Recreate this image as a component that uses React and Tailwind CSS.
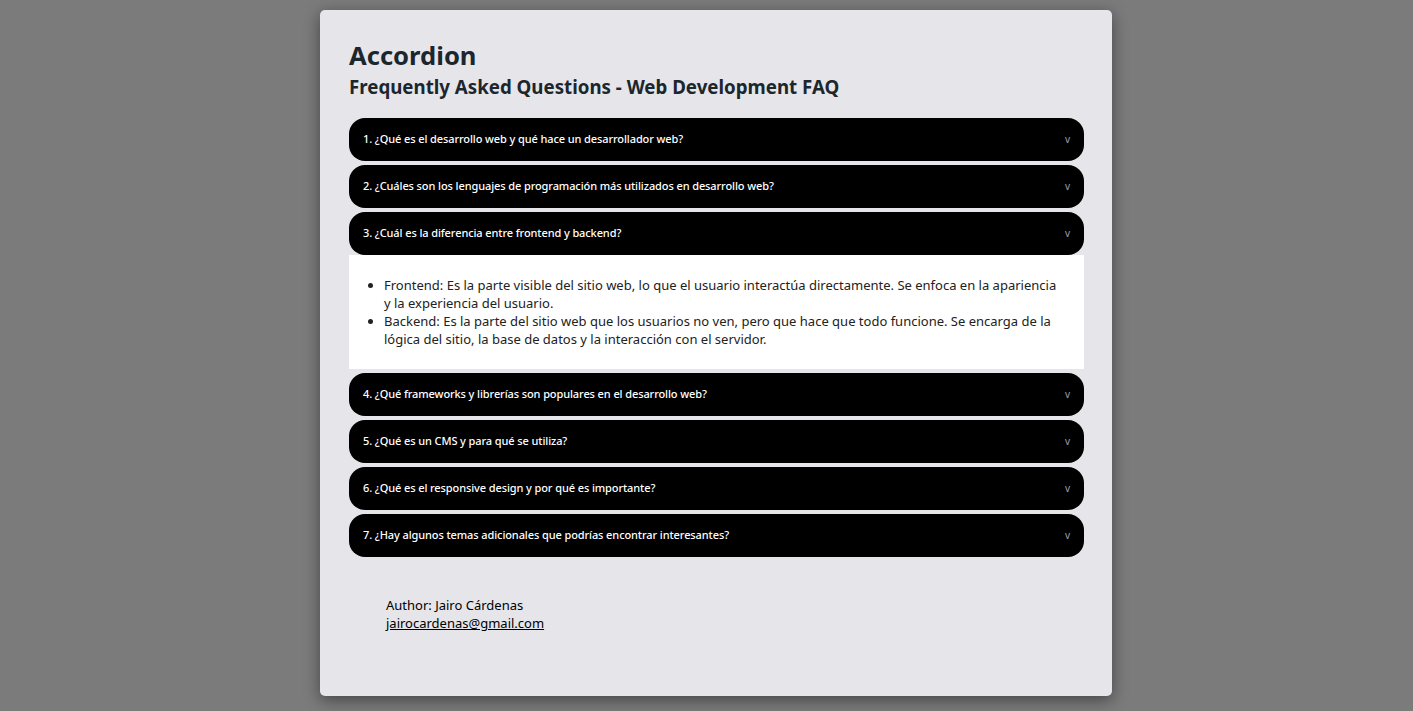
const faqs = [
  { q: '1. ¿Qué es el desarrollo web y qué hace un desarrollador web?' },
  { q: '2. ¿Cuáles son los lenguajes de programación más utilizados en desarrollo web?' },
  {
    q: '3. ¿Cuál es la diferencia entre frontend y backend?',
    open: true,
    items: [
      'Frontend: Es la parte visible del sitio web, lo que el usuario interactúa directamente. Se enfoca en la apariencia y la experiencia del usuario.',
      'Backend: Es la parte del sitio web que los usuarios no ven, pero que hace que todo funcione. Se encarga de la lógica del sitio, la base de datos y la interacción con el servidor.',
    ],
  },
  { q: '4. ¿Qué frameworks y librerías son populares en el desarrollo web?' },
  { q: '5. ¿Qué es un CMS y para qué se utiliza?' },
  { q: '6. ¿Qué es el responsive design y por qué es importante?' },
  { q: '7. ¿Hay algunos temas adicionales que podrías encontrar interesantes?' },
];

const FaqItem = ({ faq }) => (
  <div>
    <button className="w-full h-[43px] bg-black rounded-[16px] flex items-center justify-between pl-[14px] pr-[14px] text-left">
      <span className="text-white text-[11px] font-medium tracking-[-0.1px]">{faq.q}</span>
      <span className="text-gray-400 text-[10px] leading-none -mt-[2px]">v</span>
    </button>
    {faq.open && (
      <div className="bg-white pt-[21px] pb-[21px] pl-[35px] pr-[18px]">
        <ul className="list-disc text-[#222] text-[13px] leading-[18px]">
          {faq.items.map((t) => (
            <li key={t}>{t}</li>
          ))}
        </ul>
      </div>
    )}
  </div>
);

export default function App() {
  return (
    <div
      className="min-h-[711px] bg-[#7b7b7b] flex justify-center pt-[10px] pl-[19px]"
      style={{ fontFamily: '"Noto Sans", "Open Sans", sans-serif' }}
    >
      <div className="w-[792px] h-[686px] bg-[#e6e5ea] rounded-[5px] shadow-[0_4px_16px_rgba(0,0,0,0.45)] pl-[29px] pr-[28px] pt-[30px]">
        <h1 className="text-[25.6px] font-bold text-[#1c262d] leading-[32px]">Accordion</h1>
        <h2 className="text-[18.7px] font-bold text-[#1c262d] leading-[26px] mt-[2px]">
          Frequently Asked Questions - Web Development FAQ
        </h2>
        <div className="mt-[18px] flex flex-col gap-[4px]">
          {faqs.map((f) => (
            <FaqItem key={f.q} faq={f} />
          ))}
        </div>
        <div className="mt-[39px] pl-[37px] text-[13px] leading-[18px] text-black">
          <p>Author: Jairo Cárdenas</p>
          <a href="#" className="underline">jairocardenas@gmail.com</a>
        </div>
      </div>
    </div>
  );
}
